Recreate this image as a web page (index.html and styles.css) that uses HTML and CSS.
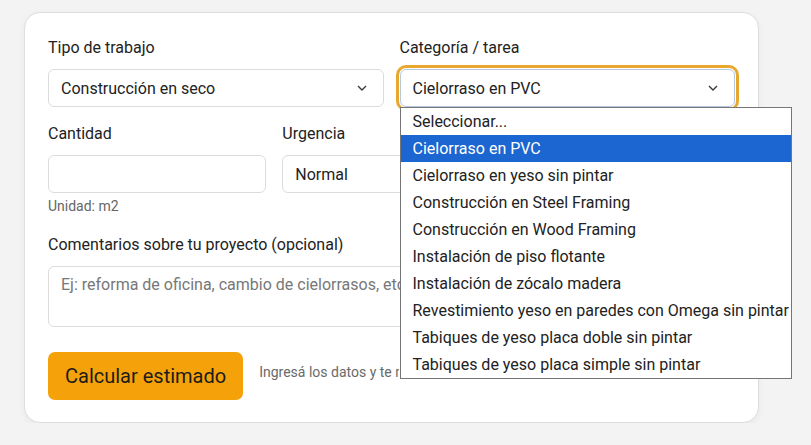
FILE: index.html
```html
<!DOCTYPE html>
<html lang="es">
<head>
<meta charset="utf-8">
<title>Estimador</title>
<link rel="stylesheet" href="styles.css">
</head>
<body>
<div class="card">
  <div class="grid two">
    <div class="field">
      <div class="label">Tipo de trabajo</div>
      <div class="select">
        <span>Construcción en seco</span>
        <svg class="chev" width="10" height="6" viewBox="0 0 10 6"><polyline points="1,1 5,5 9,1" fill="none" stroke="#3a3a3a" stroke-width="1.4"/></svg>
      </div>
    </div>
    <div class="field">
      <div class="label">Categoría / tarea</div>
      <div class="select-wrap">
        <div class="select focused">
          <span>Cielorraso en PVC</span>
          <svg class="chev" width="10" height="6" viewBox="0 0 10 6"><polyline points="1,1 5,5 9,1" fill="none" stroke="#3a3a3a" stroke-width="1.4"/></svg>
        </div>
        <ul class="dropdown">
          <li>Seleccionar...</li>
          <li class="active">Cielorraso en PVC</li>
          <li>Cielorraso en yeso sin pintar</li>
          <li>Construcción en Steel Framing</li>
          <li>Construcción en Wood Framing</li>
          <li>Instalación de piso flotante</li>
          <li>Instalación de zócalo madera</li>
          <li>Revestimiento yeso en paredes con Omega sin pintar</li>
          <li>Tabiques de yeso placa doble sin pintar</li>
          <li>Tabiques de yeso placa simple sin pintar</li>
        </ul>
      </div>
    </div>
  </div>

  <div class="grid three">
    <div class="field">
      <div class="label">Cantidad</div>
      <div class="input"></div>
      <div class="hint">Unidad: m2</div>
    </div>
    <div class="field">
      <div class="label">Urgencia</div>
      <div class="select">
        <span>Normal</span>
        <svg class="chev" width="10" height="6" viewBox="0 0 10 6"><polyline points="1,1 5,5 9,1" fill="none" stroke="#3a3a3a" stroke-width="1.4"/></svg>
      </div>
    </div>
    <div class="field"></div>
  </div>

  <div class="field comments">
    <div class="label">Comentarios sobre tu proyecto (opcional)</div>
    <div class="textarea"><span class="placeholder">Ej: reforma de oficina, cambio de cielorrasos, etc.</span></div>
  </div>

  <div class="actions">
    <button class="btn">Calcular estimado</button>
    <span class="note">Ingresá los datos y te mostramos un estimado.</span>
  </div>
</div>
</body>
</html>
```

FILE: styles.css
```css
* { box-sizing: border-box; }
html, body { margin: 0; }
body {
  background: #f3f3f3;
  font-family: Roboto, "Liberation Sans", sans-serif;
  color: #222;
  padding: 12px 0 0 24px;
}
.card {
  width: 735px;
  background: #fff;
  border: 1px solid #dedede;
  border-radius: 16px;
  box-shadow: 0 2px 6px rgba(0,0,0,0.05);
  padding: 24px 23px 22px 23px;
}
.grid { display: grid; gap: 16px; }
.grid.two { grid-template-columns: 1fr 1fr; }
.grid.three { grid-template-columns: 1fr 1fr 1fr; margin-top: 16px; }
.label {
  font-size: 16px;
  line-height: 22px;
  margin-bottom: 10px;
  color: #222;
}
.select, .input, .textarea {
  border: 1px solid #dcdcdc;
  border-radius: 6px;
  background: #fff;
}
.select {
  height: 38px;
  display: flex;
  align-items: center;
  justify-content: space-between;
  padding: 0 16px 0 12px;
  font-size: 16px;
  color: #222;
}
.chev { display: block; }
.select.focused {
  border-color: #b8c8e3;
  box-shadow: 0 0 0 1px #fff, 0 0 0 4px #e8a82f;
}
.select-wrap { position: relative; z-index: 5; }
.dropdown {
  position: absolute;
  left: 0;
  top: 100%;
  width: 392px;
  margin: 0;
  padding: 0;
  list-style: none;
  background: #fff;
  border: 1px solid #767676;
  z-index: 100;
}
.dropdown li {
  height: 27px;
  line-height: 27px;
  padding-left: 12px;
  font-size: 16px;
  color: #222;
  white-space: nowrap;
}
.dropdown li.active {
  background: #1b66d1;
  color: #fff;
}
.input { height: 38px; }
.hint {
  margin-top: 4px;
  font-size: 14px;
  line-height: 18px;
  color: #666;
}
.comments { margin-top: 19px; }
.textarea {
  height: 61px;
  padding: 8px 12px;
  font-size: 16px;
  overflow: hidden;
  white-space: nowrap;
}
.placeholder { color: #777; }
.actions {
  margin-top: 25px;
  display: flex;
  align-items: center;
  gap: 16px;
}
.btn {
  height: 48px;
  padding: 0 17px;
  background: #f5a20a;
  border: none;
  border-radius: 7px;
  font-family: Roboto, "Liberation Sans", sans-serif;
  font-size: 20px;
  color: #1c1c1c;
}
.note {
  font-size: 14px;
  line-height: 18px;
  color: #6a6a6a;
  white-space: nowrap;
  width: 140px;
  overflow: hidden;
  margin-bottom: 8px;
}
```
